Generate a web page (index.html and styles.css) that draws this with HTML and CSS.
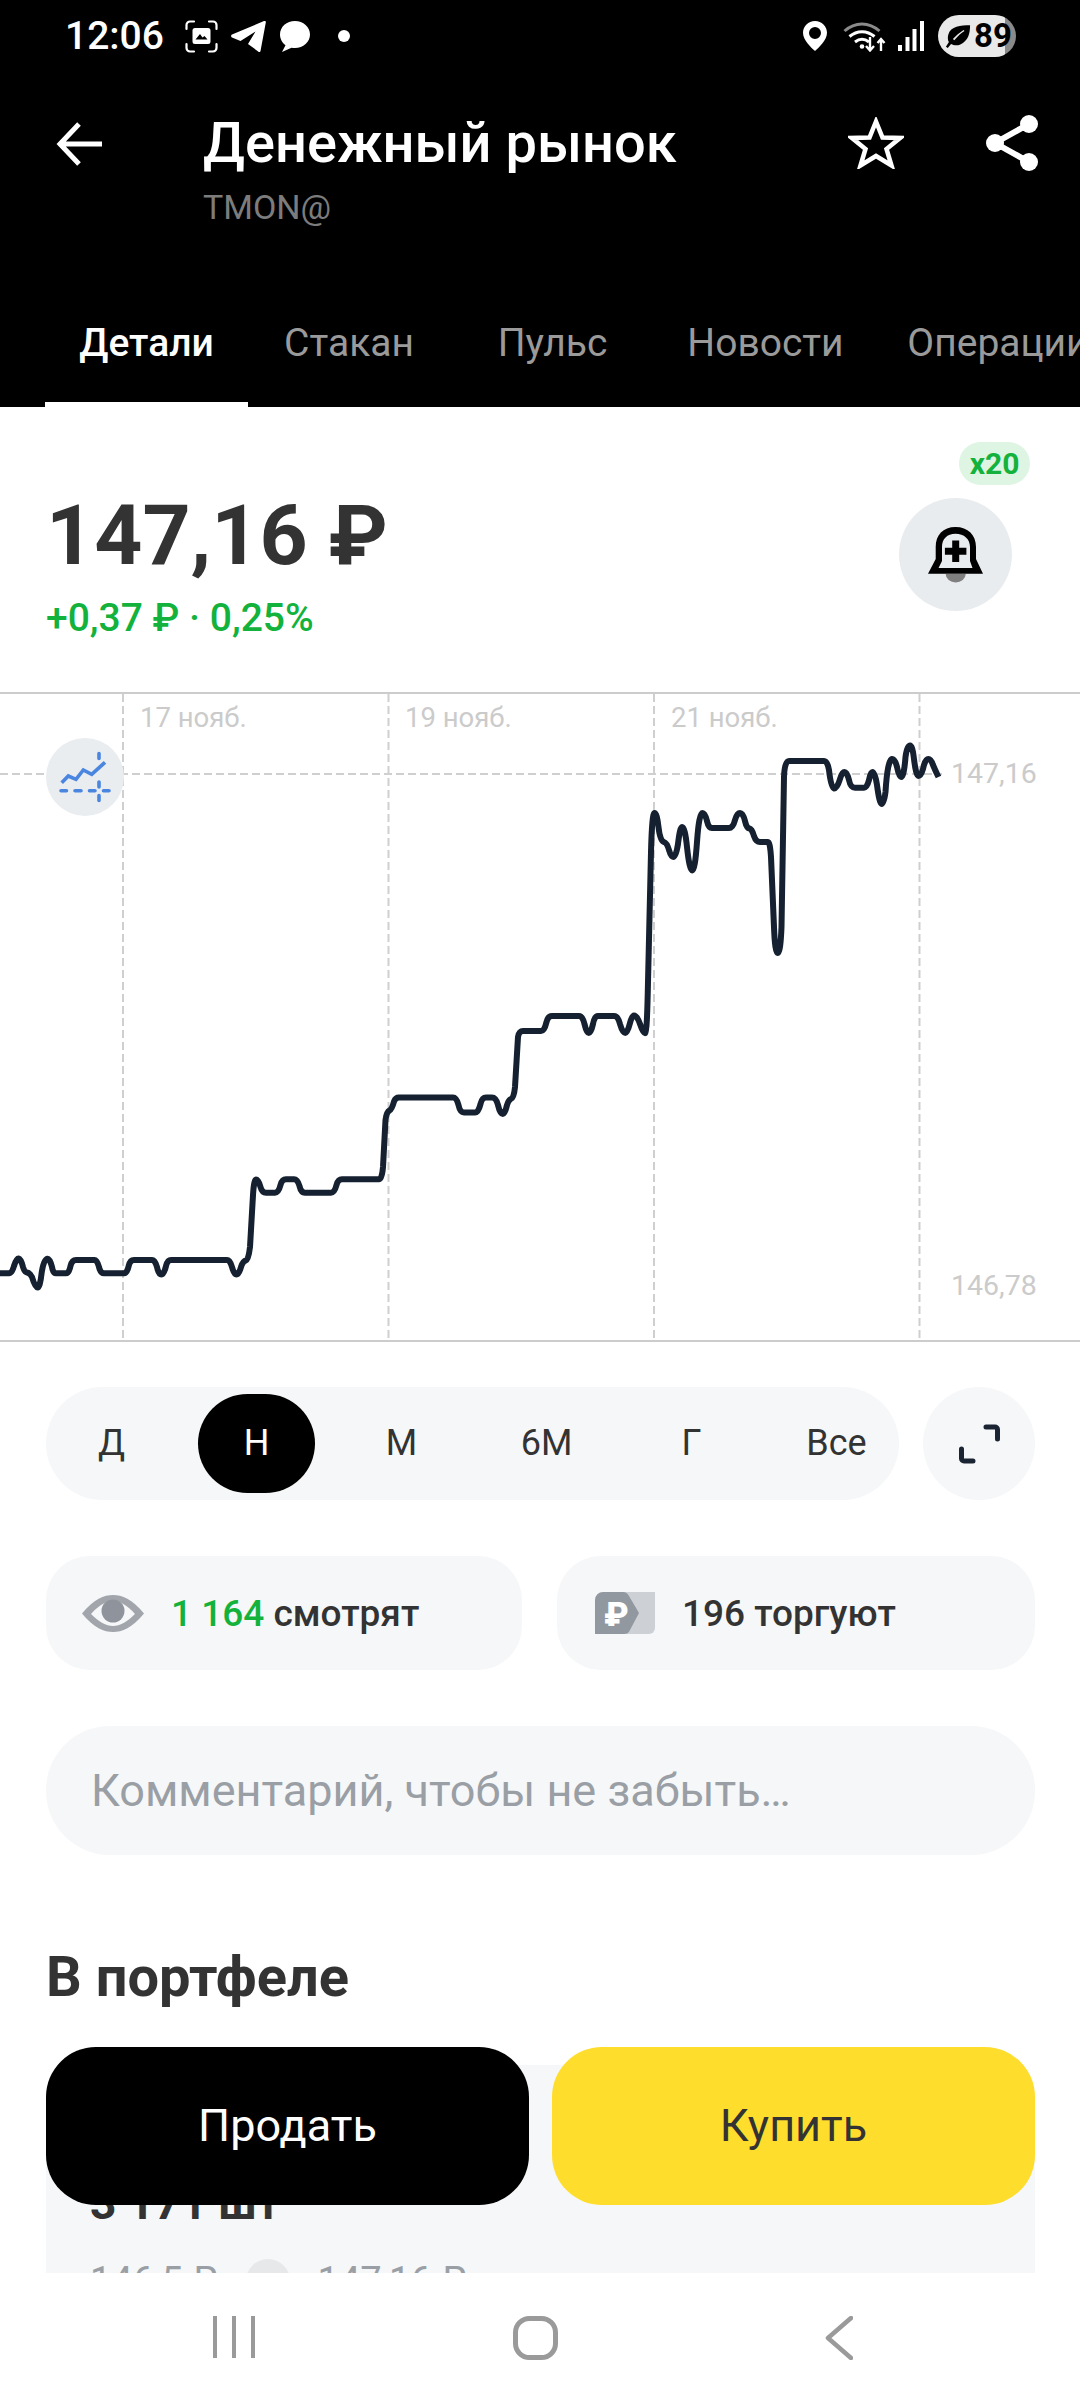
FILE: index.html
```html
<!DOCTYPE html>
<html lang="ru">
<head>
<meta charset="utf-8">
<title>Денежный рынок</title>
<link rel="stylesheet" href="styles.css">
</head>
<body>
<div class="screen">
  <header class="header">
    <div class="status">
      <span class="time">12:06</span>
      <svg class="ic-shot" viewBox="0 0 33 33"><path d="M1.500 9V5a3.500 3.500 0 0 1 3.500-3.500H9M24 1.500h4A3.500 3.500 0 0 1 31.500 5v4M31.500 24v4a3.500 3.500 0 0 1-3.500 3.500h-4M9 31.500H5A3.500 3.500 0 0 1 1.500 28v-4" fill="none" stroke="#fff" stroke-width="2.200" stroke-linecap="round"/><path fill="#fff" fill-rule="evenodd" d="M10 8h13a2.500 2.500 0 0 1 2.500 2.500v11A2.500 2.500 0 0 1 23 24H10a2.500 2.500 0 0 1-2.500-2.500v-11A2.500 2.500 0 0 1 10 8ZM10.500 19.500h12l-3-3.500-2 1.500-2.500-3.500Z"/></svg>
      <svg class="ic-tg" viewBox="0 0 35 31"><path fill="#fff" d="M1 13.500 33 0c1.500-.5 2 .5 1.800 1.500L29.500 30c-.3 1.200-1.300 1.300-2 .7L17 23l7.500-12.500L9.500 20 1 16.500c-1.200-.6-1.200-2.500 0-3Z"/></svg>
      <svg class="ic-msg" viewBox="0 0 30 31"><path fill="#fff" d="M15 0C6.700 0 0 5.800 0 13.500c0 4.600 2.400 8.400 5.500 10.800L2 31l9.500-4.300c1.100.2 2.300.3 3.500.3 8.300 0 15-6 15-13.500S23.300 0 15 0Z"/></svg>
      <span class="dot"></span>
      <div class="status-right">
        <svg class="ic-pin" viewBox="0 0 24 30"><path fill="#fff" fill-rule="evenodd" d="M12 0C5.300 0 0 5.200 0 11.800 0 19 8 26.500 12 30c4-3.500 12-11 12-18.200C24 5.200 18.700 0 12 0Zm0 6a6 6 0 1 1 0 12 6 6 0 0 1 0-12Z"/></svg>
        <svg class="ic-wifi" viewBox="0 0 44 32"><path d="M1.500 11C12 1.500 26 1.500 36.500 11" fill="none" stroke="#8a8a8a" stroke-width="3"/><path d="M6.500 16.500c7.500-6.500 17.500-6.500 25 0M12 22c4.500-3.500 9.500-3.500 14 0" fill="none" stroke="#fff" stroke-width="3"/><circle cx="19" cy="26.500" r="2.300" fill="#fff"/><path d="M27 17v13M23 26l4 4.500 4-4.500M38 31V19M34.500 23l3.500-4 3.500 4" fill="none" stroke="#fff" stroke-width="2.400"/></svg>
        <svg class="ic-signal" viewBox="0 0 28 30"><path fill="#fff" d="M1 24h4v6H1zM8.500 16h4v14h-4zM15.500 8h4v22h-4zM23 0h4v30h-4z"/></svg>
        <div class="battery">
          <svg class="ic-leaf" viewBox="0 0 28 26"><path fill="#000" d="M27 1C17 1 6 2 3.500 11c-.8 3-.5 6 .7 8L1 24l2 1.500 3.500-4.500c3 1.800 7 2 10 .5C25 18 27 10 27 1Zm-6 6c-3 2-7 5-11 10l-1.500-1.200C12 12 16 8.500 20 6Z"/></svg>
          <span class="bat-num">89</span>
        </div>
      </div>
    </div>
    <div class="appbar">
      <svg class="ic-back" viewBox="0 0 47 44"><path d="M46 22H5M23 2 4 22l19 20" fill="none" stroke="#fff" stroke-width="5"/></svg>
      <div class="titles">
        <h1 class="title">Денежный рынок</h1>
        <div class="ticker">TMON@</div>
      </div>
      <svg class="ic-star" viewBox="0 0 56 52"><path d="M28 4.500 34.500 20.500 52 21 38.500 32 43.500 48.500 28 39 12.500 48.500 17.500 32 4 21 21.500 20.500Z" fill="none" stroke="#fff" stroke-width="4.500" stroke-linejoin="miter"/></svg>
      <svg class="ic-share" viewBox="0 0 52 56"><path d="M43 9 9 28l34 19" fill="none" stroke="#fff" stroke-width="6"/><circle cx="43" cy="9" r="9" fill="#fff"/><circle cx="9" cy="28" r="9" fill="#fff"/><circle cx="43" cy="47" r="9" fill="#fff"/></svg>
    </div>
    <nav class="tabs">
      <span class="tab tab-active">Детали</span>
      <span class="tab">Стакан</span>
      <span class="tab">Пульс</span>
      <span class="tab">Новости</span>
      <span class="tab">Операции</span>
    </nav>
  </header>

  <main class="content">
    <section class="quote">
      <div>
        <div class="price">147,16 ₽</div>
        <div class="change">+0,37 ₽ · 0,25%</div>
      </div>
      <div class="alerts">
        <span class="badge">x20</span>
        <span class="bell">
          <svg class="ic-bell" viewBox="0 0 55 56"><path fill="#000" fill-rule="evenodd" d="M27.500 0C15 0 7.700 8 7.700 20v12L0 46.700h55L48 32V20C48 8 40 0 27.500 0Zm0 6.700C19 6.700 14 12 14 20v14l-3.500 7h34L42 34V20c0-8-6-13.300-14.500-13.300Z"/><path fill="#000" d="M24.200 13.500h7v7.300h7.200v7h-7.200V35h-7v-7.200h-7.300v-7h7.300Z"/><path fill="#808080" d="M17.700 47h20a10 8.500 0 0 1-20 0Z"/></svg>
        </span>
      </div>
    </section>

    <section class="chart">
      <svg class="chart-svg" viewBox="0 692 1080 648">
        <path class="grid" d="M123 692V1340M388.500 692V1340M654 692V1340M919.500 692V1340M0 772H942"/>
        <path class="line" d="M0 1271.300H9Q12 1271 14 1264Q16.500 1256 18.600 1256.500Q21 1257 23 1265Q24.500 1270 27 1270.500Q30 1271 32 1275Q35 1285.500 37.500 1285.500Q40 1285.500 41.500 1272Q43.500 1257 47.500 1256.800Q50 1257 52 1265Q53 1271.300 56 1271.300H66Q69 1271.300 70.500 1264Q72 1258 76 1258H94.500Q97 1258 99 1265Q100.500 1271.300 104 1271.300H124Q127 1271.300 128.700 1264Q130 1258 134 1258H152Q155 1258 157 1265Q158.500 1272.500 161.400 1272.500Q164 1272.500 166 1264Q167.500 1258 171 1258H227Q230 1258 232 1265Q234 1272.500 236.400 1272.500Q239 1272.500 241 1265Q243 1259 246 1258.500Q248.500 1258 250 1245L253 1193Q254 1177.500 256 1177.500Q258.500 1177.500 260.500 1185Q262 1190.700 266 1190.700H275Q278.500 1190.700 280.500 1183Q282 1177.300 286 1177.300H294Q297.500 1177.300 299.500 1184Q301 1190.700 305 1190.700H331Q334.500 1190.700 336.500 1183Q338 1177.300 342 1177.300H379Q382 1177.300 383 1165L385.500 1118Q386.500 1110 389.500 1108.500Q392 1107 394 1099.500Q395.500 1095.500 399 1095.500H453Q456.500 1095.500 458.500 1103Q460 1110.500 464 1110.500H475Q478.500 1110.500 480.500 1102Q482 1095.500 486 1095.500H492Q496 1095.500 498 1103Q500 1112 502.800 1112Q505 1112 507 1103Q508.500 1098 511 1097Q514 1096 515 1085L518 1035Q519 1029 523 1029H541Q544.500 1029 546.500 1020Q548 1013.900 552 1013.900H579Q582.500 1013.900 584.500 1022Q586.500 1031 588.800 1031Q591 1031 593 1022Q594.500 1014 598 1014H614Q618 1014 620 1022Q622.500 1031 625.300 1031Q627.500 1031 630 1021Q632 1013.500 634 1013.500Q637 1013.500 640 1022Q643.500 1032 645.500 1031Q647 1030 648 980L651 850Q652 811 654.500 811Q657 811 658.500 825Q660 839 664 840Q667 841 669 848Q671 855 673.300 855Q676 855 678 842Q680 825 682 825Q685 825 687 845Q689.500 868.500 692.300 868.500Q695 868.500 697 840Q699 811 702.500 811Q705 811 707 819Q708.500 826 712 826H729Q733 826 735 818Q737 811 740 811Q743 811 745 819Q746.500 826 749.500 826.500Q752 827 754 834Q756 840 760 840H768Q770 840 771 855L774 925Q775 951 777.700 951Q780.500 951 781.500 925L784 775Q784.500 759 789 759H824Q827.500 759 829 768Q831 786 834 786.500Q837 787 840 777Q842 770 844.500 770Q847 770 849 778Q850.500 785.700 855 785.700H864Q867 785.700 869 778Q870.500 770 872.500 770Q875 770 877 783Q879.500 802 881.700 802Q884 802 885.500 790Q887.500 758 892 757Q895 757 897 765Q899 775 901 775Q904 775 905.500 755Q907 743.500 910 743.500Q912.500 743.500 914 757Q916 774 918.500 774Q921 774 923 767Q925 757 928.300 757Q931 757 933 763Q936 770 938.500 775"/>
      </svg>
      <span class="date date-1">17 нояб.</span>
      <span class="date date-2">19 нояб.</span>
      <span class="date date-3">21 нояб.</span>
      <span class="axis axis-top">147,16</span>
      <span class="axis axis-bottom">146,78</span>
      <span class="indicators">
        <svg viewBox="46 738 78 78"><path d="M61.700 782.700 68.300 776 76 779.300 83.300 770 91.700 774.300 105 762.300" fill="none" stroke="#4a86e0" stroke-width="3.600"/><path d="M61 790.700h5.500M75 790.700h6M89.500 790.700h5.500M103.500 790.700h5.500M99 753.500v5M99 782v5M99 795.500v5" fill="none" stroke="#4a86e0" stroke-width="3.600" stroke-linecap="round"/></svg>
      </span>
    </section>

    <section class="ranges">
      <div class="range-pill">
        <span class="range">Д</span>
        <span class="range range-active">Н</span>
        <span class="range">М</span>
        <span class="range">6М</span>
        <span class="range">Г</span>
        <span class="range">Все</span>
      </div>
      <span class="expand">
        <svg class="ic-expand" viewBox="0 0 41 40"><path d="M27 3h9a2.500 2.500 0 0 1 2.500 2.500V15M2.500 25v9.500A2.500 2.500 0 0 0 5 37h9" fill="none" stroke="#1a2433" stroke-width="5" stroke-linecap="round"/></svg>
      </span>
    </section>

    <section class="stats">
      <div class="stat">
        <svg class="ic-eye" viewBox="0 0 62 37"><path fill="#a2a6ac" d="M0 18.500C12 4 22 0 31 0s19 4 31 18.500C50 33 40 37 31 37S12 33 0 18.500Z"/><path fill="#f6f7f8" d="M9 19C17 10 24 6 31 6s14 4 22 13c-8 8-15 12-22 12S17 27 9 19Z"/><circle cx="31" cy="16" r="11.500" fill="#8f949c"/></svg>
        <span><span class="green">1 164</span> смотрят</span>
      </div>
      <div class="stat stat-trade">
        <svg class="ic-trade" viewBox="0 0 60 42"><path fill="#cdd1d6" d="M20 0h40v36a6 6 0 0 1-6 6H20Z"/><path fill="#9298a0" d="M8 0h20c3 0 4 1 6 4l10 17-9 17c-1.500 3-3 4-6 4H0V8a8 8 0 0 1 8-8Z"/><text class="trade-sign" x="9" y="34">₽</text></svg>
        <span>196 торгуют</span>
      </div>
    </section>

    <div class="note">Комментарий, чтобы не забыть…</div>

    <h2 class="section-title">В портфеле</h2>

    <section class="holding">
      <div class="holding-qty">3 171 шт</div>
      <div class="holding-prices">
        <span>146,5 ₽</span>
        <span class="chip"></span>
        <span>147,16 ₽</span>
      </div>
    </section>
  </main>

  <div class="actions">
    <span class="btn btn-sell">Продать</span>
    <span class="btn btn-buy">Купить</span>
  </div>

  <footer class="navbar">
    <svg class="ic-recents" viewBox="0 0 42 42"><path d="M2 0v42M21 0v42M40 0v42" stroke="#9a9a9a" stroke-width="4" fill="none"/></svg>
    <svg class="ic-home" viewBox="0 0 45 44"><rect x="2.500" y="2.500" width="40" height="39" rx="14" fill="none" stroke="#9a9a9a" stroke-width="5"/></svg>
    <svg class="ic-navback" viewBox="0 0 28 44"><path d="M26 2 3 22l23 20" fill="none" stroke="#9a9a9a" stroke-width="4.500" stroke-linecap="round" stroke-linejoin="round"/></svg>
  </footer>
</div>
</body>
</html>
```

FILE: styles.css
```css
* { box-sizing: border-box; }
html, body { margin: 0; padding: 0; background: #fff; }
body { font-family: Roboto, "Noto Sans", "Liberation Sans", sans-serif; color: #333; }
svg { display: block; flex: none; }

.screen { position: relative; width: 1080px; height: 2408px; overflow: hidden; display: flex; flex-direction: column; background: #fff; }

/* header */
.header { background: #000; color: #fff; height: 407px; flex: none; overflow: hidden; }
.status { height: 72px; display: flex; align-items: center; padding: 0 64px 0 65px; }
.time { font-size: 39px; font-weight: 500; width: 100px; line-height: 72px; white-space: nowrap; }
.ic-shot { width: 33px; height: 33px; margin-left: 20px; }
.ic-tg { width: 35px; height: 31px; margin-left: 13px; }
.ic-msg { width: 30px; height: 31px; margin-left: 14px; }
.dot { width: 12px; height: 12px; border-radius: 50%; background: #fff; margin-left: 28px; }
.status-right { margin-left: auto; display: flex; align-items: center; }
.ic-pin { width: 24px; height: 30px; }
.ic-wifi { width: 44px; height: 32px; margin-left: 16px; }
.ic-signal { width: 28px; height: 30px; margin-left: 10px; }
.battery { width: 78px; height: 42px; margin-left: 13px; border-radius: 21px; background: linear-gradient(90deg, #e9e9e9 0, #e9e9e9 86%, #8a8a8a 86%); display: flex; align-items: center; padding-left: 7px; color: #000; }
.ic-leaf { width: 26px; height: 25px; }
.bat-num { font-size: 33px; font-weight: 700; line-height: 42px; margin-left: 3px; }

.appbar { height: 218px; display: flex; align-items: flex-start; padding: 40px 42px 0 56px; }
.ic-back { width: 47px; height: 44px; margin-top: 10px; }
.titles { margin-left: 100px; }
.title { margin: 0; font-size: 56px; font-weight: 500; line-height: 62px; color: #fff; white-space: nowrap; }
.ticker { margin-top: 13px; font-size: 34px; line-height: 40px; color: #7c7c7c; }
.ic-star { width: 56px; height: 52px; margin-left: auto; margin-top: 5px; }
.ic-share { width: 52px; height: 56px; margin-left: 82px; margin-top: 3px; }

.tabs { display: grid; grid-template-columns: 203px 202px 205px 221px 244px; width: 1120px; margin-left: 45px; }
.tab { font-size: 39px; line-height: 106px; height: 117px; text-align: center; color: #9a9a9a; border-bottom: 5px solid transparent; white-space: nowrap; }
.tab-active { color: #fff; font-weight: 500; border-bottom-color: #fff; }

/* content */
.content { flex: 1; min-height: 0; overflow: hidden; }

.quote { height: 285px; display: flex; justify-content: space-between; padding: 35px 50px 0 46px; }
.price { margin-top: 44px; font-size: 84px; font-weight: 700; line-height: 100px; color: #333; white-space: nowrap; }
.change { margin-top: 9px; font-size: 39px; font-weight: 500; line-height: 46px; color: #12b23c; white-space: nowrap; }
.alerts { width: 131px; display: flex; flex-direction: column; gap: 13px; }
.badge { align-self: flex-end; width: 71px; height: 43px; border-radius: 22px; background: #dff5e3; color: #12b23c; font-size: 30px; font-weight: 700; line-height: 43px; text-align: center; }
.bell { align-self: flex-start; width: 113px; height: 113px; border-radius: 50%; background: #e9ecee; display: flex; align-items: center; justify-content: center; }
.ic-bell { width: 55px; height: 56px; }

.chart { position: relative; height: 650px; border-top: 2px solid #ccc; border-bottom: 2px solid #ccc; }
.chart-svg { width: 1080px; height: 648px; }
.grid { fill: none; stroke: #cfcfcf; stroke-width: 2; stroke-dasharray: 8 4; }
.line { fill: none; stroke: #152030; stroke-width: 6; stroke-linejoin: round; stroke-linecap: butt; }
.date, .axis { position: absolute; line-height: 30px; color: #cbcbcb; white-space: nowrap; }
.date { top: 9px; font-size: 27.5px; }
.date-1 { left: 140px; }
.date-2 { left: 405px; }
.date-3 { left: 671px; }
.axis { left: 951px; font-size: 28.5px; }
.axis-top { top: 65px; }
.axis-bottom { top: 577px; }
.indicators { position: absolute; left: 46px; top: 44px; width: 78px; height: 78px; border-radius: 50%; background: #e9edf0; }
.indicators svg { width: 78px; height: 78px; }

.ranges { display: flex; gap: 24px; margin-top: 45px; padding: 0 45px 0 46px; }
.range-pill { width: 853px; height: 113px; border-radius: 57px; background: #f6f7f8; display: flex; align-items: center; gap: 28px; padding: 0 6px 0 7px; }
.range { width: 117px; height: 99px; border-radius: 50px; font-size: 36px; line-height: 99px; text-align: center; color: #333; flex: none; }
.range-active { background: #000; color: #fff; }
.expand { width: 112px; height: 113px; border-radius: 50%; background: #f6f7f8; display: flex; align-items: center; justify-content: center; }
.ic-expand { width: 41px; height: 40px; }

.stats { display: grid; grid-template-columns: 476px 478px; gap: 35px; margin-top: 56px; padding-left: 46px; }
.stat { height: 114px; border-radius: 44px; background: #f6f7f8; display: flex; align-items: center; gap: 27px; padding-left: 36px; font-size: 37px; font-weight: 500; color: #333; white-space: nowrap; }
.stat-trade { padding-left: 38px; }
.green { color: #12b23c; }
.ic-eye { width: 62px; height: 37px; }
.ic-trade { width: 60px; height: 42px; }
.trade-sign { font-family: Roboto, sans-serif; font-size: 34px; font-weight: 900; fill: #fff; }

.note { height: 129px; margin: 56px 45px 0 46px; border-radius: 64px; background: #f6f7f8; padding-left: 45px; font-size: 45px; line-height: 129px; color: #9a9fa6; white-space: nowrap; }

.section-title { margin: 91px 0 0 46px; font-size: 56px; font-weight: 700; line-height: 62px; color: #333; }

.holding { margin: 57px 45px 0 46px; height: 300px; background: #f5f7f8; border-radius: 44px 44px 0 0; padding: 110px 0 0 44px; }
.holding-qty { font-size: 46px; font-weight: 700; line-height: 56px; color: #333; white-space: nowrap; }
.holding-prices { display: flex; align-items: center; gap: 28px; margin-top: 28px; font-size: 38px; line-height: 42px; color: #9a9fa6; white-space: nowrap; }
.chip { width: 44px; height: 44px; border-radius: 50%; background: #e6e8ea; }

/* floating trade buttons */
.actions { position: absolute; left: 46px; right: 45px; bottom: 203px; display: grid; grid-template-columns: 1fr 1fr; gap: 23px; }
.btn { height: 158px; border-radius: 50px; font-size: 45px; line-height: 158px; text-align: center; }
.btn-sell { background: #000; color: #fff; }
.btn-buy { background: #ffdd2d; color: #333; }

.navbar { position: relative; height: 135px; flex: none; background: #fff; }
.ic-recents, .ic-home, .ic-navback { position: absolute; top: 43px; }
.ic-recents { left: 213px; width: 42px; height: 42px; }
.ic-home { left: 513px; width: 45px; height: 44px; }
.ic-navback { left: 825px; width: 28px; height: 44px; }
```
